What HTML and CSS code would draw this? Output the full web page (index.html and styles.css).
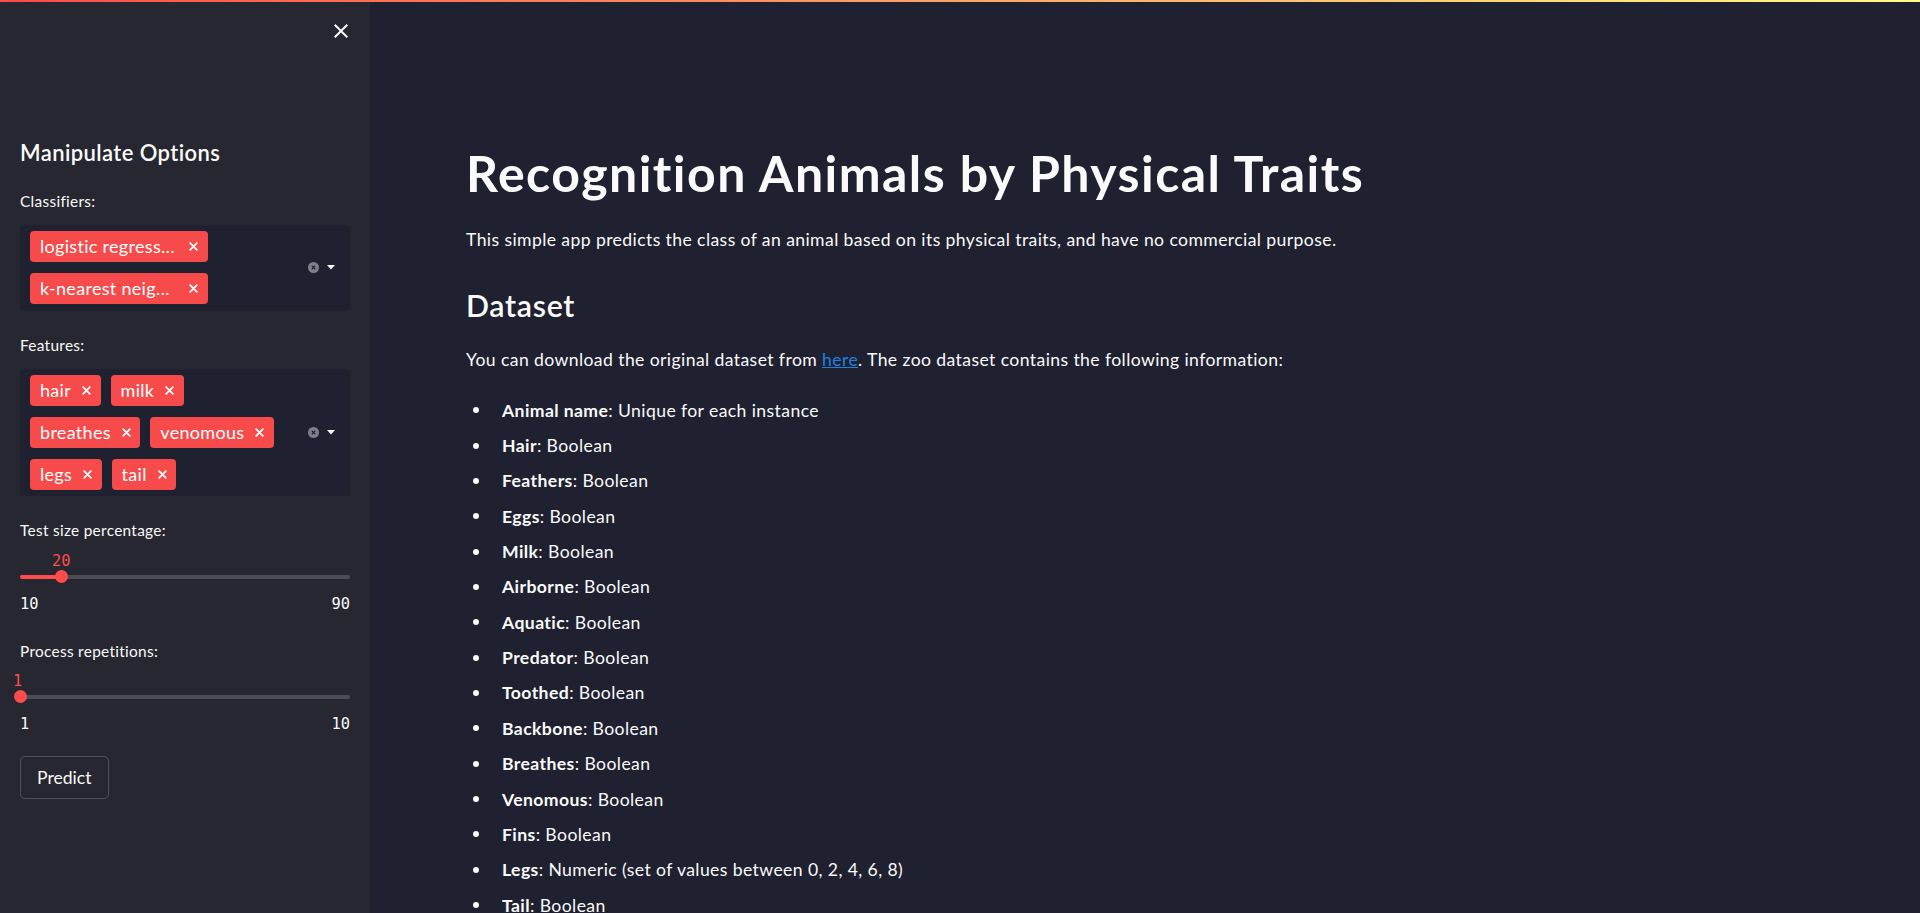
FILE: index.html
```html
<!DOCTYPE html>
<html lang="en">
<head>
<meta charset="utf-8">
<title>Recognition Animals by Physical Traits</title>
<link rel="stylesheet" href="styles.css">
</head>
<body>
<div class="decoration"></div>
<div class="app">
  <aside class="sidebar">
    <div class="sidebar-header">
      <button class="close-btn" aria-label="Close sidebar">
        <svg width="24" height="24" viewBox="0 0 24 24"><path fill="#fafafa" d="M19 6.41L17.59 5 12 10.59 6.41 5 5 6.41 10.59 12 5 17.59 6.41 19 12 13.41 17.59 19 19 17.59 13.41 12z"/></svg>
      </button>
    </div>
    <div class="sidebar-content">
      <h2 class="sidebar-title">Manipulate Options</h2>

      <label class="widget-label">Classifiers:</label>
      <div class="multiselect">
        <div class="tags">
          <span class="tag"><span class="tag-text">logistic regression</span><svg class="tag-x" width="9" height="9" viewBox="0 0 9 9"><path d="M1.2 1.2l6.6 6.6M7.8 1.2L1.2 7.8"/></svg></span>
          <span class="tag"><span class="tag-text">k-nearest neighbors</span><svg class="tag-x" width="9" height="9" viewBox="0 0 9 9"><path d="M1.2 1.2l6.6 6.6M7.8 1.2L1.2 7.8"/></svg></span>
        </div>
        <div class="ms-icons">
          <svg width="11" height="11" viewBox="0 0 11 11"><circle cx="5.5" cy="5.5" r="5.5" fill="#7e7f8a"/><path d="M3.8 3.8l3.4 3.4M7.2 3.8l-3.4 3.4" stroke="#262730" stroke-width="1.3"/></svg>
          <svg width="8" height="5" viewBox="0 0 8 5"><path d="M0 0h8L4 4.6z" fill="#fafafa"/></svg>
        </div>
      </div>

      <label class="widget-label">Features:</label>
      <div class="multiselect">
        <div class="tags">
          <span class="tag"><span class="tag-text">hair</span><svg class="tag-x" width="9" height="9" viewBox="0 0 9 9"><path d="M1.2 1.2l6.6 6.6M7.8 1.2L1.2 7.8"/></svg></span>
          <span class="tag"><span class="tag-text">milk</span><svg class="tag-x" width="9" height="9" viewBox="0 0 9 9"><path d="M1.2 1.2l6.6 6.6M7.8 1.2L1.2 7.8"/></svg></span>
          <span class="tag"><span class="tag-text">breathes</span><svg class="tag-x" width="9" height="9" viewBox="0 0 9 9"><path d="M1.2 1.2l6.6 6.6M7.8 1.2L1.2 7.8"/></svg></span>
          <span class="tag"><span class="tag-text">venomous</span><svg class="tag-x" width="9" height="9" viewBox="0 0 9 9"><path d="M1.2 1.2l6.6 6.6M7.8 1.2L1.2 7.8"/></svg></span>
          <span class="tag"><span class="tag-text">legs</span><svg class="tag-x" width="9" height="9" viewBox="0 0 9 9"><path d="M1.2 1.2l6.6 6.6M7.8 1.2L1.2 7.8"/></svg></span>
          <span class="tag"><span class="tag-text">tail</span><svg class="tag-x" width="9" height="9" viewBox="0 0 9 9"><path d="M1.2 1.2l6.6 6.6M7.8 1.2L1.2 7.8"/></svg></span>
        </div>
        <div class="ms-icons">
          <svg width="11" height="11" viewBox="0 0 11 11"><circle cx="5.5" cy="5.5" r="5.5" fill="#7e7f8a"/><path d="M3.8 3.8l3.4 3.4M7.2 3.8l-3.4 3.4" stroke="#262730" stroke-width="1.3"/></svg>
          <svg width="8" height="5" viewBox="0 0 8 5"><path d="M0 0h8L4 4.6z" fill="#fafafa"/></svg>
        </div>
      </div>

      <label class="widget-label">Test size percentage:</label>
      <div class="slider">
        <div class="slider-value-row"><span class="slider-spacer" style="width:12.5%"></span><span class="slider-value">20</span></div>
        <div class="slider-track-row">
          <span class="track-fill" style="width:12.5%"></span>
          <span class="thumb"></span>
          <span class="track-rest"></span>
        </div>
        <div class="slider-labels"><span>10</span><span>90</span></div>
      </div>

      <label class="widget-label after-slider">Process repetitions:</label>
      <div class="slider">
        <div class="slider-value-row"><span class="slider-spacer" style="width:0%"></span><span class="slider-value edge">1</span></div>
        <div class="slider-track-row">
          <span class="track-fill" style="width:0%"></span>
          <span class="thumb"></span>
          <span class="track-rest"></span>
        </div>
        <div class="slider-labels"><span>1</span><span>10</span></div>
      </div>

      <button class="predict-btn">Predict</button>
    </div>
  </aside>

  <main class="main">
    <div class="block">
      <h1 class="title">Recognition Animals by Physical Traits</h1>
      <p class="intro">This simple app predicts the class of an animal based on its physical traits, and have no commercial purpose.</p>
      <h2 class="section-title">Dataset</h2>
      <p class="source">You can download the original dataset from <a href="#">here</a>. The zoo dataset contains the following information:</p>
      <ul class="features">
        <li><b>Animal name</b>: Unique for each instance</li>
        <li><b>Hair</b>: Boolean</li>
        <li><b>Feathers</b>: Boolean</li>
        <li><b>Eggs</b>: Boolean</li>
        <li><b>Milk</b>: Boolean</li>
        <li><b>Airborne</b>: Boolean</li>
        <li><b>Aquatic</b>: Boolean</li>
        <li><b>Predator</b>: Boolean</li>
        <li><b>Toothed</b>: Boolean</li>
        <li><b>Backbone</b>: Boolean</li>
        <li><b>Breathes</b>: Boolean</li>
        <li><b>Venomous</b>: Boolean</li>
        <li><b>Fins</b>: Boolean</li>
        <li><b>Legs</b>: Numeric (set of values between 0, 2, 4, 6, 8)</li>
        <li><b>Tail</b>: Boolean</li>
        <li><b>Domestic</b>: Boolean</li>
        <li><b>Catsize</b>: Boolean</li>
        <li><b>Type</b>: Numeric (integer values in range [1, 7])</li>
      </ul>
    </div>
  </main>
</div>
</body>
</html>
```

FILE: styles.css
```css
html, body {
  margin: 0;
  height: 100%;
  overflow: hidden;
}

body {
  background: #1f2030;
  color: #fafafa;
  font-family: Lato, "Noto Sans", sans-serif;
  font-size: 17.6px;
}

.decoration {
  position: fixed;
  top: 0;
  left: 0;
  right: 0;
  height: 2px;
  background: linear-gradient(90deg, #ff4b4b, #fffd80);
  z-index: 10;
}

.app {
  display: flex;
  height: 100vh;
}

/* ---------- Sidebar ---------- */
.sidebar {
  width: 370px;
  flex: none;
  background: #262730;
  display: flex;
  flex-direction: column;
}

.sidebar-header {
  height: 62px;
  display: flex;
  justify-content: flex-end;
  align-items: center;
  padding-right: 17px;
}

.close-btn {
  display: flex;
  background: none;
  border: 0;
  padding: 0;
  cursor: pointer;
}

.sidebar-content {
  padding: 0 20px;
  display: flex;
  flex-direction: column;
  align-items: stretch;
}

.sidebar-title {
  margin: 78.3px 0 0;
  font-size: 22px;
  line-height: 26.4px;
  font-weight: 600;
  letter-spacing: 0.4px;
}

.widget-label {
  display: block;
  margin-top: 22px;
  font-size: 15.4px;
  line-height: 24.64px;
  letter-spacing: 0.3px;
}

.widget-label.after-slider {
  margin-top: 24px;
}

.multiselect {
  margin-top: 11.7px;
  display: flex;
  align-items: center;
  background: #1f2030;
  border-radius: 4px;
  padding: 6px 0 6.5px 10px;
}

.tags {
  flex: 1;
  display: flex;
  flex-wrap: wrap;
  gap: 11px 10px;
  padding-right: 13px;
}

.tag {
  display: inline-flex;
  align-items: center;
  gap: 11px;
  height: 31px;
  padding: 0 9.5px 0 10px;
  background: #f74b4b;
  border-radius: 4px;
  color: #fff;
  font-size: 18px;
  letter-spacing: 0.3px;
}

.tag-text {
  max-width: 138px;
  white-space: nowrap;
  overflow: hidden;
  text-overflow: ellipsis;
  line-height: 31px;
}

.tag-x {
  flex: none;
  stroke: #fff;
  stroke-width: 1.8;
  stroke-linecap: round;
  fill: none;
}

.ms-icons {
  display: flex;
  align-items: center;
  gap: 8px;
  padding-right: 15px;
}

/* slider */
.slider {
  margin-top: 10.6px;
  font-family: "DejaVu Sans Mono", "Liberation Mono", monospace;
  font-size: 15.4px;
}

.slider-value-row {
  display: flex;
  height: 14px;
  line-height: 14px;
}

.slider-spacer {
  flex: none;
}

.slider-value {
  color: #ff4b4b;
  transform: translateX(-50%);
}

.slider-value.edge {
  transform: translateX(-75%);
}

.slider-track-row {
  margin-top: 2px;
  height: 14px;
  display: flex;
  align-items: center;
}

.track-fill {
  flex: none;
  height: 4px;
  background: #ff4b4b;
  border-radius: 2px 0 0 2px;
}

.thumb {
  flex: none;
  width: 13px;
  height: 13px;
  margin: 0 -6.5px;
  border-radius: 50%;
  background: #ff4b4b;
  z-index: 1;
}

.track-rest {
  flex: 1;
  height: 4px;
  background: #4c4d57;
  border-radius: 0 2px 2px 0;
}

.slider-labels {
  margin-top: 9px;
  display: flex;
  justify-content: space-between;
  line-height: 22px;
}

.predict-btn {
  align-self: flex-start;
  margin-top: 21.3px;
  padding: 6.42px 16px;
  background: transparent;
  color: #fafafa;
  border: 1px solid rgba(250, 250, 250, 0.2);
  border-radius: 5px;
  font-family: Lato, "Noto Sans", sans-serif;
  font-size: 17.6px;
  line-height: 28.16px;
}

/* ---------- Main ---------- */
.main {
  flex: 1;
  overflow: hidden;
}

.block {
  padding: 142.8px 40px 0 96px;
}

.title {
  margin: 0;
  font-size: 50px;
  line-height: 60px;
  font-weight: 700;
  letter-spacing: 1.45px;
}

.intro,
.source {
  margin: 0;
  line-height: 28.16px;
  letter-spacing: 0.4px;
}

.intro {
  margin-top: 23.7px;
}

.section-title {
  margin: 32.8px 0 0;
  font-size: 30.3px;
  line-height: 1.2;
  font-weight: 600;
  letter-spacing: 0.7px;
}

.source {
  margin-top: 22.6px;
}

.source a {
  color: #1c83e1;
  text-decoration: underline;
}

.features {
  margin: 18.6px 0 0;
  padding: 0;
  list-style: none;
  letter-spacing: 0.4px;
}

.features li {
  padding: 3.6px 0;
  line-height: 28.16px;
}

.features li::before {
  content: "";
  display: inline-block;
  width: 6px;
  height: 6px;
  border-radius: 50%;
  background: #fafafa;
  margin: 0 23px 3.5px 7px;
}

.features b {
  font-weight: 700;
}
```
